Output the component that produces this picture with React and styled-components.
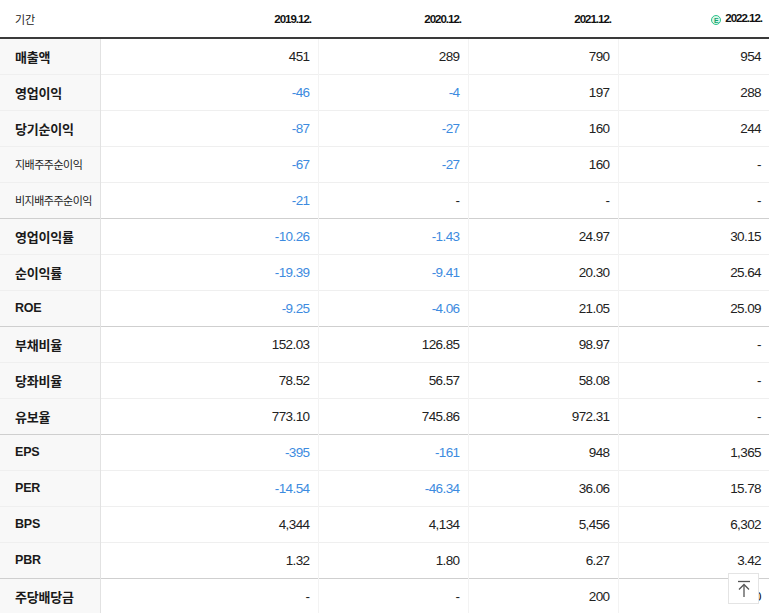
import React from 'react';
import styled, { createGlobalStyle } from 'styled-components';

const GlobalStyle = createGlobalStyle`
  html, body { margin: 0; padding: 0; background: #fff; }
  body { font-family: "Liberation Sans", Arial, "Noto Sans CJK KR", sans-serif; color: #222; }
`;

const years = ['2019.12.', '2020.12.', '2021.12.', '2022.12.'];
const colWidths = [100, 218, 150, 150, 151];

const rows = [
  { label: '매출액', values: ['451', '289', '790', '954'] },
  { label: '영업이익', values: ['-46', '-4', '197', '288'] },
  { label: '당기순이익', values: ['-87', '-27', '160', '244'] },
  { label: '지배주주순이익', small: true, values: ['-67', '-27', '160', '-'] },
  { label: '비지배주주순이익', small: true, end: true, values: ['-21', '-', '-', '-'] },
  { label: '영업이익률', values: ['-10.26', '-1.43', '24.97', '30.15'] },
  { label: '순이익률', values: ['-19.39', '-9.41', '20.30', '25.64'] },
  { label: 'ROE', latin: true, end: true, values: ['-9.25', '-4.06', '21.05', '25.09'] },
  { label: '부채비율', values: ['152.03', '126.85', '98.97', '-'] },
  { label: '당좌비율', values: ['78.52', '56.57', '58.08', '-'] },
  { label: '유보율', end: true, values: ['773.10', '745.86', '972.31', '-'] },
  { label: 'EPS', latin: true, values: ['-395', '-161', '948', '1,365'] },
  { label: 'PER', latin: true, values: ['-14.54', '-46.34', '36.06', '15.78'] },
  { label: 'BPS', latin: true, values: ['4,344', '4,134', '5,456', '6,302'] },
  { label: 'PBR', latin: true, end: true, values: ['1.32', '1.80', '6.27', '3.42'] },
  { label: '주당배당금', values: ['-', '-', '200', '200'] },
];

export default function App() {
  return (
    <Page>
      <GlobalStyle />
      <Table>
        <colgroup>
          {colWidths.map((w, i) => (
            <Col key={i} $w={w} />
          ))}
        </colgroup>
        <thead>
          <tr>
            <HeadLabel>기간</HeadLabel>
            {years.map((y, i) => (
              <HeadCell key={y}>
                {i === 3 && <EstBadge>E</EstBadge>}
                {y}
              </HeadCell>
            ))}
          </tr>
        </thead>
        <tbody>
          {rows.map((r) => (
            <Row key={r.label} $end={r.end}>
              <LabelCell $small={r.small} $latin={r.latin}>{r.label}</LabelCell>
              {r.values.map((v, i) => (
                <ValueCell key={i} $neg={v.startsWith('-') && v.length > 1}>{v}</ValueCell>
              ))}
            </Row>
          ))}
        </tbody>
      </Table>
      <TopButton aria-label="맨 위로">
        <svg width="14" height="18" viewBox="0 0 14 18" fill="none" stroke="#555" strokeWidth="1.3">
          <path d="M1 1.5h12" />
          <path d="M7 17V5" />
          <path d="M2 9.5l5-5 5 5" />
        </svg>
      </TopButton>
    </Page>
  );
}

const Page = styled.div`
  position: relative;
  width: 769px;
  height: 613px;
  overflow: hidden;
`;

const Table = styled.table`
  width: 769px;
  border-collapse: collapse;
  table-layout: fixed;
`;

const Col = styled.col`
  width: ${(p) => p.$w}px;
`;

const HeadLabel = styled.th`
  height: 37px;
  padding: 0 0 0 15px;
  text-align: left;
  font-family: "Noto Sans CJK KR", sans-serif;
  font-size: 11px;
  font-weight: 400;
  color: #222;
  border-bottom: 2px solid #3a3a3a;
`;

const HeadCell = styled.th`
  height: 37px;
  padding: 0 7px 0 0;
  text-align: right;
  font-size: 11.5px;
  font-weight: 700;
  letter-spacing: -1px;
  color: #111;
  border-bottom: 2px solid #3a3a3a;
  white-space: nowrap;
`;

const EstBadge = styled.span`
  display: inline-flex;
  align-items: center;
  justify-content: center;
  box-sizing: border-box;
  width: 10px;
  height: 10px;
  margin-right: 4px;
  border: 1px solid #2ec38c;
  border-radius: 50%;
  background: #dcf6ea;
  color: #14a56f;
  font-size: 7px;
  font-weight: 700;
  letter-spacing: 0;
  vertical-align: -1px;
`;

const Row = styled.tr`
  height: 36px;
  border-bottom: 1px solid ${(p) => (p.$end ? '#cfcfcf' : '#efefef')};
`;

const LabelCell = styled.td`
  padding: 0 0 0 15px;
  background: #f8f8f8;
  border-right: 1px solid #e2e2e2;
  font-family: ${(p) => (p.$latin ? '"Liberation Sans", Arial' : '"Noto Sans CJK KR"')}, sans-serif;
  font-size: ${(p) => (p.$small ? '11px' : p.$latin ? '12.5px' : '13px')};
  font-weight: ${(p) => (p.$small ? 400 : 700)};
  letter-spacing: ${(p) => (p.$small ? '-0.5px' : '-0.2px')};
  color: #1a1a1a;
  white-space: nowrap;
`;

const ValueCell = styled.td`
  padding: 0 8px 0 0;
  text-align: right;
  font-size: 13.5px;
  letter-spacing: -0.6px;
  color: ${(p) => (p.$neg ? '#3d8be0' : '#222')};
  border-right: 1px solid #f3f3f3;
  &:last-child { border-right: none; }
`;

const TopButton = styled.button`
  position: absolute;
  left: 728px;
  top: 573px;
  width: 31px;
  height: 31px;
  padding: 0;
  display: flex;
  align-items: center;
  justify-content: center;
  background: #fff;
  border: 1px solid #e4e4e4;
  cursor: pointer;
`;
